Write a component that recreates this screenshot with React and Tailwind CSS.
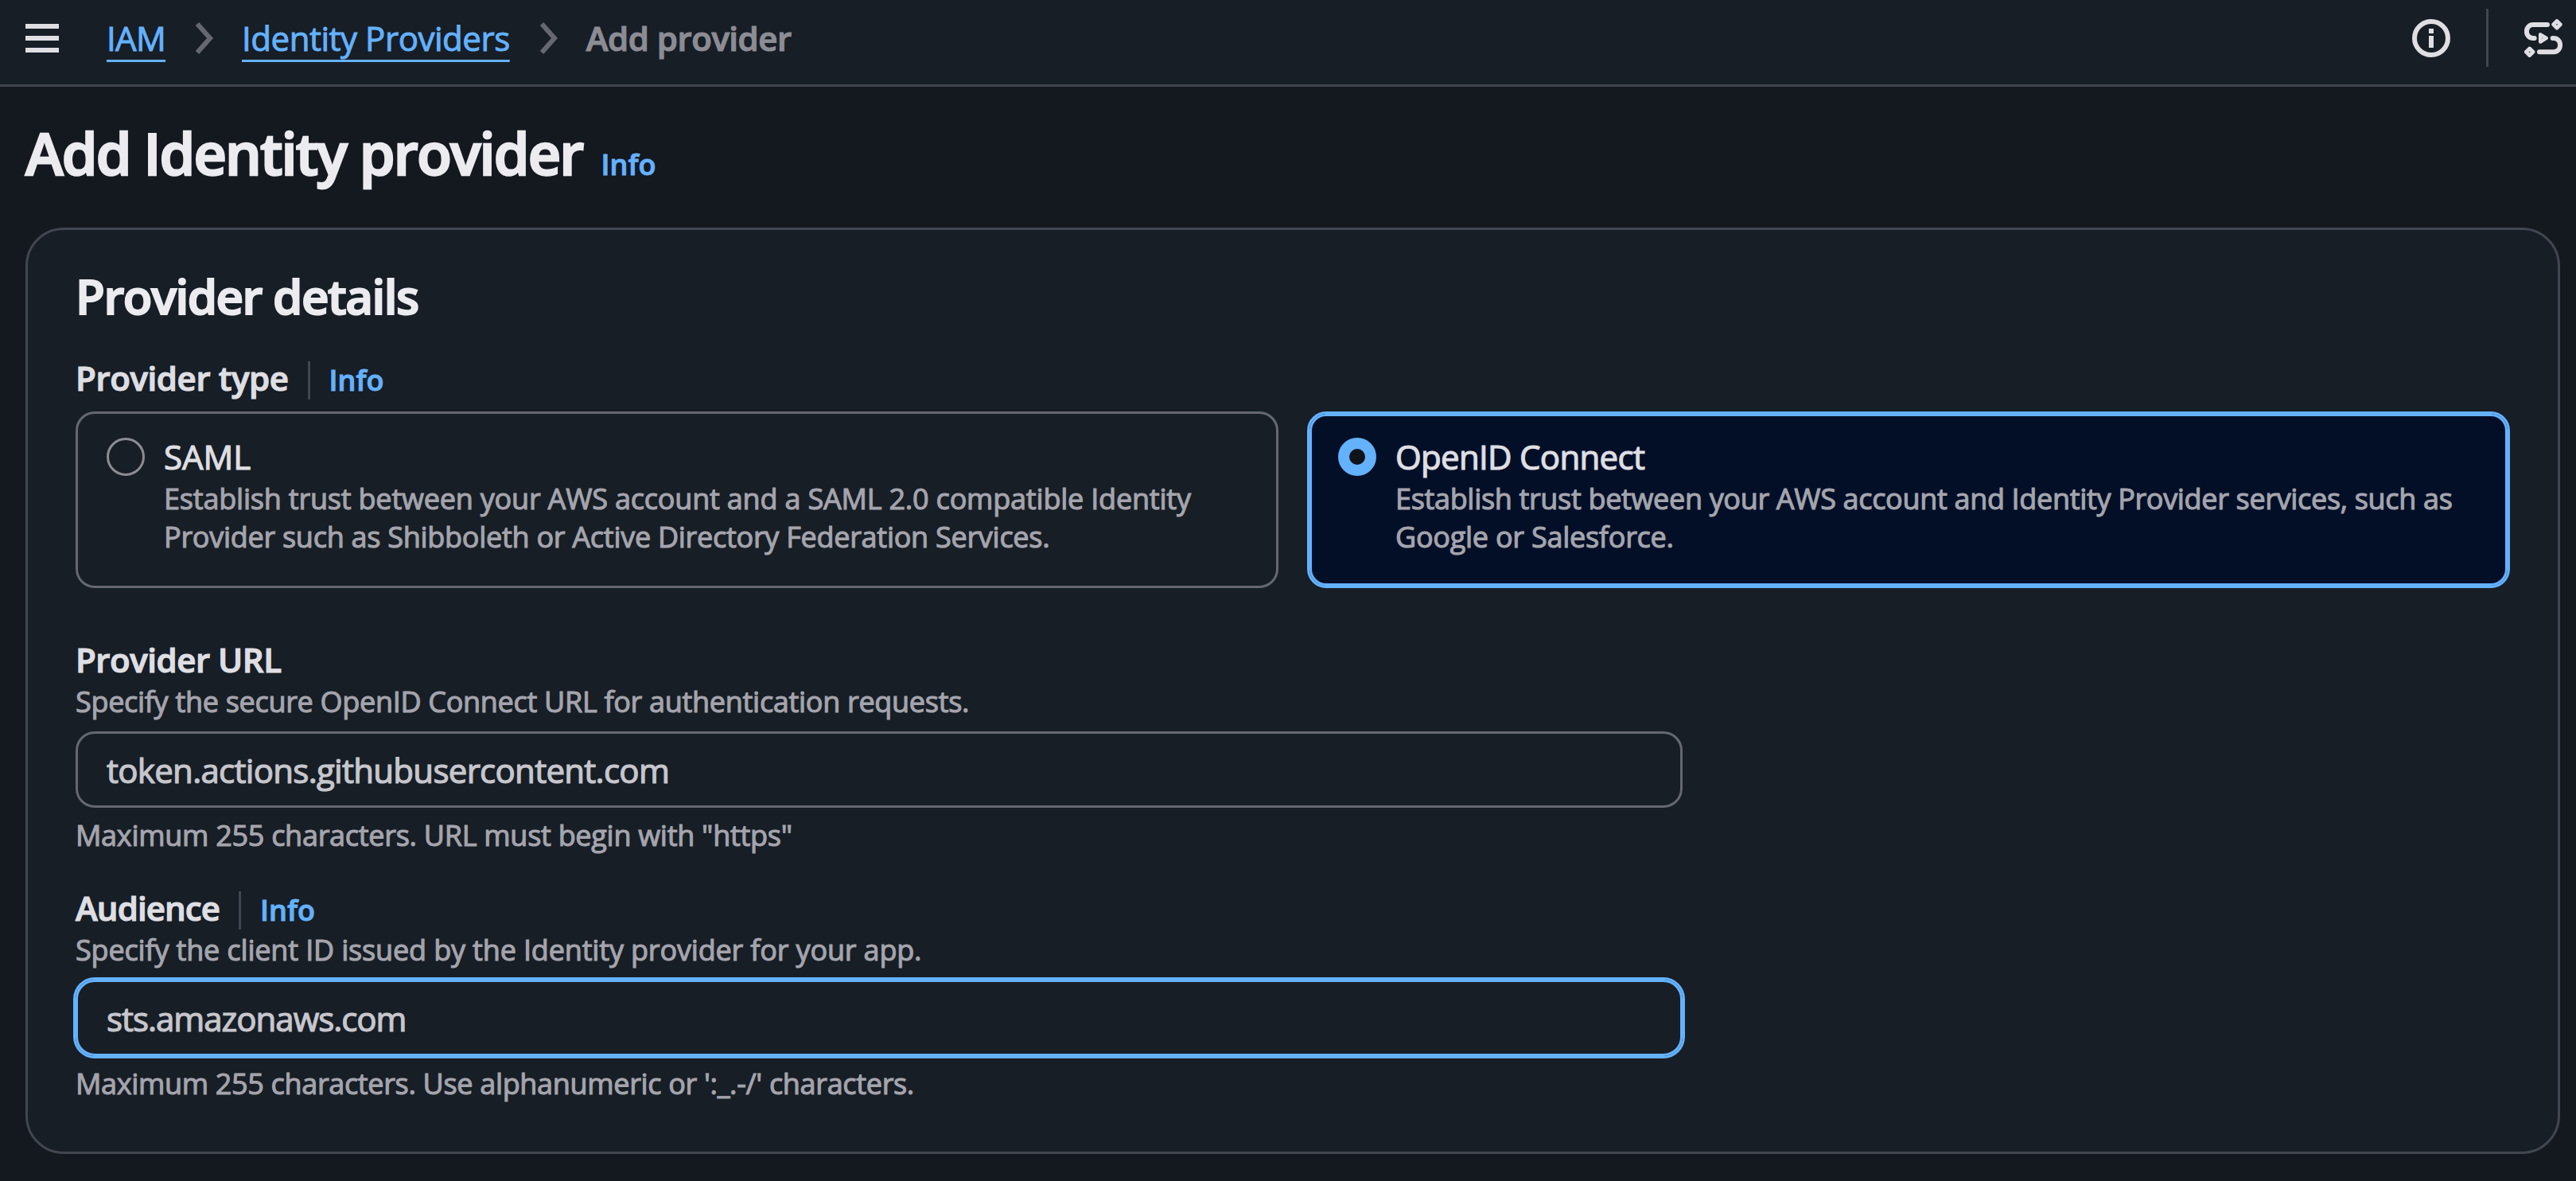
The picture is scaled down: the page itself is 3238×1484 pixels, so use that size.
import React from "react";

function Chevron() {
  return (
    <svg className="mx-6 mt-1.5 h-12 w-12 shrink-0" viewBox="0 0 48 48" fill="none" stroke="#656871" strokeWidth="6">
      <path d="M16 6 32 24 16 42" />
    </svg>
  );
}

function MenuIcon() {
  return (
    <svg className="h-9 w-[42px]" viewBox="0 0 42 36" fill="#dedee3">
      <path d="M0 0h42v6H0zM0 15h42v6H0zM0 30h42v6H0z" />
    </svg>
  );
}

function InfoIcon() {
  return (
    <svg className="h-12 w-12" viewBox="0 0 48 48" fill="none">
      <circle cx="24" cy="24" r="21" stroke="#dedee3" strokeWidth="6" />
      <path d="M21 12h6v6h-6zM21 21h6v15h-6z" fill="#dedee3" />
    </svg>
  );
}

function TutorialIcon() {
  return (
    <svg className="h-12 w-12" viewBox="0 0 48 48" fill="none" stroke="#dedee3" strokeLinecap="round" strokeLinejoin="round">
      <path d="M29 7H11a8 8 0 0 0-8 8v1a8 8 0 0 0 8 8h1.7" strokeWidth="6" />
      <path d="M35.7 24H37a8 8 0 0 1 8 8v1.300a8 8 0 0 1-8 8H19" strokeWidth="6" />
      <path d="m41 2.500 4.300 4.300-4.300 4.300-4.300-4.300z" strokeWidth="4.8" />
      <path d="m6.700 37 4.300 4.300-4.300 4.300-4.300-4.300z" strokeWidth="4.8" />
      <path d="M20.200 19.300v9.200l7.600-4.600z" strokeWidth="4.5" />
    </svg>
  );
}

function InfoLink() {
  return (
    <a className="text-[36px] font-semibold tracking-[0px] text-[#64b1fd] [-webkit-text-stroke:1px]">Info</a>
  );
}

function FieldLabel({ children, className = "", info = false }) {
  return (
    <div className={"flex h-[59px] items-baseline text-[42px] leading-[59px] font-semibold text-[#dedee3] " + className}>
      <span className="[-webkit-text-stroke:1.2px]">{children}</span>
      {info && (
        <>
          <span className="mx-6 mt-[9px] h-12 w-[3px] self-start bg-[#424650]" />
          <InfoLink />
        </>
      )}
    </div>
  );
}

function Note({ children, className = "" }) {
  return (
    <p className={"text-[36px] leading-[48px] text-[#a4a4ad] [-webkit-text-stroke:1.1px] " + className}>{children}</p>
  );
}

function Tile({ selected, label, labelClass, lines }) {
  return (
    <div
      className={
        "flex h-[222px] flex-1 rounded-[24px] border-3 pt-[25px] pl-9 " +
        (selected ? "border-[#64b1fd] bg-[#020f27] shadow-[inset_0_0_0_3px_#64b1fd]" : "border-[#656871]")
      }
    >
      {selected ? (
        <span className="mt-[5px] flex h-12 w-12 shrink-0 items-center justify-center rounded-full bg-[#64b1fd]">
          <span className="h-5 w-5 rounded-full bg-[#0f141a]" />
        </span>
      ) : (
        <span className="mt-[5px] h-12 w-12 shrink-0 rounded-full border-3 border-[#8c8c94]" />
      )}
      <div className="ml-6">
        <div className={"text-[42px] leading-[58px] text-[#dedee3] [-webkit-text-stroke:1.2px] " + labelClass}>{label}</div>
        {lines.map(([text, tracking]) => (
          <Note key={text} className={"whitespace-nowrap " + tracking}>{text}</Note>
        ))}
      </div>
    </div>
  );
}

function Field({ focused, value, tracking }) {
  return (
    <input
      readOnly
      value={value}
      className={
        "mt-[13px] block h-24 w-[2020px] rounded-[24px] border-3 bg-transparent px-9 text-[42px] text-[#c6c6cd] outline-none [-webkit-text-stroke:1.2px] " +
        tracking +
        (focused ? " border-[#64b1fd] shadow-[0_0_0_3px_#64b1fd]" : " border-[#656871]")
      }
    />
  );
}

export default function App() {
  return (
    <div className="h-[1484px] w-[3238px] overflow-hidden bg-[#14181f] font-['Open_Sans',sans-serif]">
      <header className="flex h-[109px] items-start border-b-3 border-[#424650] bg-[#171e25] pr-[17px] pl-8">
        <button className="mt-[30px] mr-[60px] block h-9">
          <MenuIcon />
        </button>
        <nav className="mt-[18px] flex h-[60px] text-[42px] leading-[60px] whitespace-nowrap">
          <a className="tracking-[-0.69px] text-[#64b1fd] underline decoration-3 underline-offset-[11px] [text-decoration-skip-ink:none] [-webkit-text-stroke:1px]">IAM</a>
          <Chevron />
          <a className="tracking-[-0.46px] text-[#64b1fd] underline decoration-3 underline-offset-[11px] [text-decoration-skip-ink:none] [-webkit-text-stroke:1px]">Identity Providers</a>
          <Chevron />
          <span className="font-semibold tracking-[-0.46px] text-[#8c8c94] [-webkit-text-stroke:1.2px]">Add provider</span>
        </nav>
        <div className="ml-auto flex">
          <div className="mt-6"><InfoIcon /></div>
          <span className="mx-[45px] mt-[11px] h-[73px] w-[3px] bg-[#424650]" />
          <div className="mt-6"><TutorialIcon /></div>
        </div>
      </header>

      <main className="pt-[38px] pr-5 pl-8">
        <div className="flex h-[90px] items-baseline leading-[90px]">
          <h1 className="mr-[23px] text-[72px] font-semibold tracking-[-1.88px] text-[#ebebf0] [-webkit-text-stroke:2.4px]">Add Identity provider</h1>
          <InfoLink />
        </div>

        <section className="mt-[49px] h-[1164px] rounded-[48px] border-3 border-[#424650] bg-[#171e25] px-[60px] pt-[47px]">
          <h2 className="text-[60px] leading-[72px] font-semibold tracking-[-1.5px] text-[#ebebf0] [-webkit-text-stroke:2px]">Provider details</h2>

          <FieldLabel info className="mt-[37px] tracking-[-0.38px]">Provider type</FieldLabel>
          <div className="mt-[13px] flex gap-9">
            <Tile
              label="SAML"
              labelClass="tracking-[0px]"
              lines={[
                ["Establish trust between your AWS account and a SAML 2.0 compatible Identity", "tracking-[-0.2px]"],
                ["Provider such as Shibboleth or Active Directory Federation Services.", "tracking-[-0.27px]"],
              ]}
            />
            <Tile
              selected
              label="OpenID Connect"
              labelClass="tracking-[-0.68px]"
              lines={[
                ["Establish trust between your AWS account and Identity Provider services, such as", "tracking-[-0.33px]"],
                ["Google or Salesforce.", "tracking-[-0.25px]"],
              ]}
            />
          </div>

          <FieldLabel className="mt-[60px] tracking-[-0.45px]">Provider URL</FieldLabel>
          <Note className="tracking-[-0.3px]">Specify the secure OpenID Connect URL for authentication requests.</Note>
          <Field value="token.actions.githubusercontent.com" tracking="tracking-[-0.7px]" />
          <Note className="mt-[11px] tracking-[-0.28px]">Maximum 255 characters. URL must begin with "https"</Note>

          <FieldLabel info className="mt-[37px] tracking-[-0.9px]">Audience</FieldLabel>
          <Note className="tracking-[-0.16px]">Specify the client ID issued by the Identity provider for your app.</Note>
          <Field focused value="sts.amazonaws.com" tracking="tracking-[-1px]" />
          <Note className="mt-[11px] tracking-[-0.33px]">Maximum 255 characters. Use alphanumeric or ':_.-/' characters.</Note>
        </section>
      </main>
    </div>
  );
}
